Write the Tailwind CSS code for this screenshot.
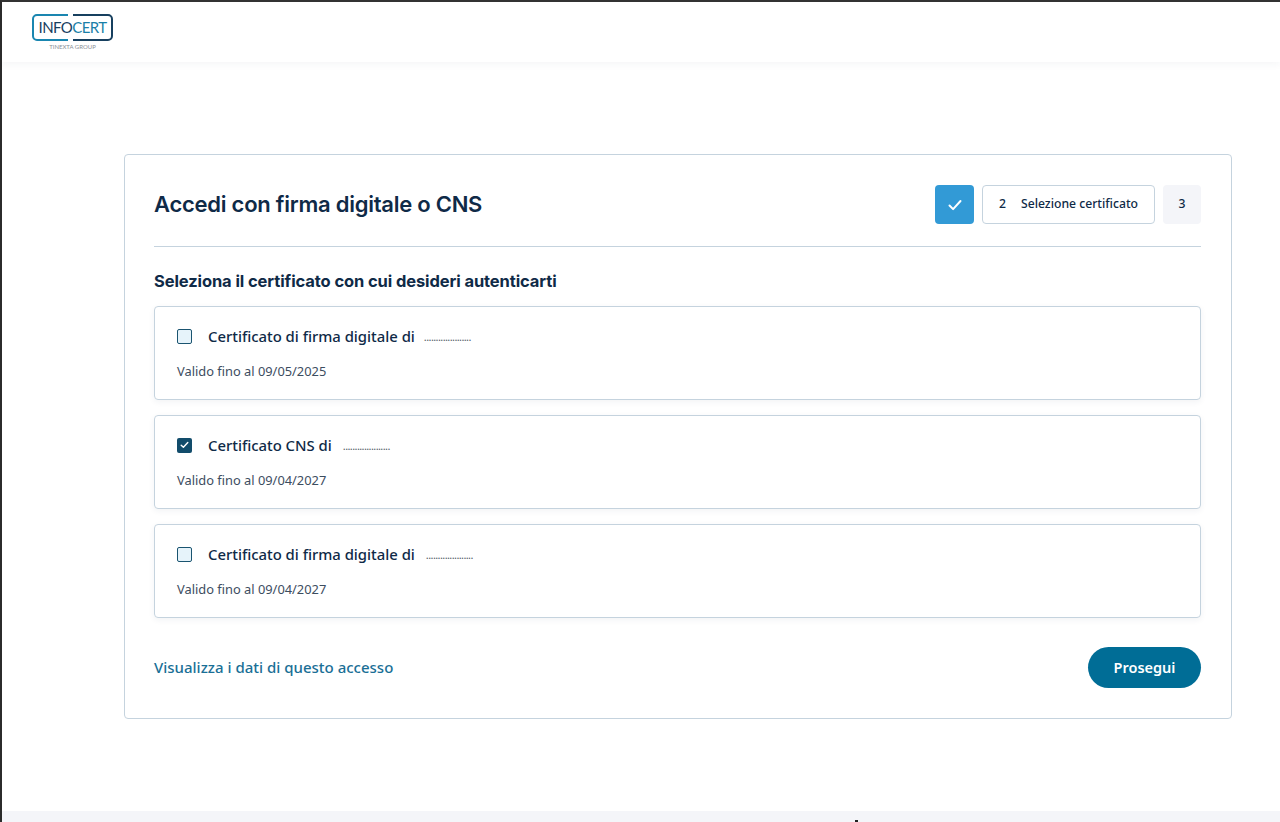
<!DOCTYPE html>
<html lang="it">

<head>
    <meta charset="UTF-8">
    <title>Accedi con firma digitale o CNS</title>
    <script src="https://cdn.jsdelivr.net/npm/@tailwindcss/browser@4"></script>
</head>

<body class="bg-white font-['Noto_Sans',sans-serif] text-[#0f2a47]">
    <div class="relative h-[822px] overflow-hidden flex flex-col border-t-2 border-t-[#333333] border-l-2 border-l-[#2b2b2b]">
        <!-- header -->
        <header class="h-[60px] shrink-0 bg-white shadow-[0_2px_8px_rgba(30,50,80,0.05)] pl-[30px] pt-[12px]">
            <div class="w-[81px]">
                <div class="relative h-[27px] w-[81px] flex items-center justify-center">
                    <svg class="absolute inset-0" width="81" height="27" viewBox="0 0 81 27" fill="none" stroke-width="2">
                        <path d="M36 1H5a4 4 0 0 0-4 4v17a4 4 0 0 0 4 4h31" stroke="#1a86b0"></path>
                        <path d="M41 1h35a4 4 0 0 1 4 4v17a4 4 0 0 1-4 4H41" stroke="#17405f"></path>
                    </svg>
                    <span class="font-['Lato',sans-serif] text-[15px] leading-none tracking-[-0.6px] text-[#17405f]">INFO<span class="text-[#1a7fa8]">CERT</span></span>
                </div>
                <div class="mt-[2px] text-center font-['Lato',sans-serif] text-[6px] leading-[7px] text-[#8a8f96]">TINEXTA GROUP</div>
            </div>
        </header>

        <main class="flex-1 pl-[122px] pt-[92px]">
            <div class="w-[1108px] h-[565px] bg-white border border-[#c5d3de] rounded-[4px] pl-[29px] pr-[30px] pt-[30px]">
                <!-- title + stepper -->
                <div class="flex items-center justify-between h-[39px]">
                    <h1 class="font-['Inter',sans-serif] font-semibold text-[22px] tracking-[-0.25px]">Accedi con firma digitale o CNS</h1>
                    <div class="flex items-center gap-2">
                        <div class="w-[39px] h-[39px] rounded-[4px] bg-[#329ad6] flex items-center justify-center">
                            <svg width="16" height="14" viewBox="0 0 16 14" fill="none" stroke="#ffffff" stroke-width="2" stroke-linecap="round" stroke-linejoin="round">
                                <path d="M2.5 7.5l3.6 3.6L13.5 3"></path>
                            </svg>
                        </div>
                        <div class="w-[173px] h-[39px] rounded-[4px] border border-[#c5d3de] flex items-center pl-[16px] text-[12.2px] font-medium">
                            <span class="w-[22px]">2</span><span>Selezione certificato</span>
                        </div>
                        <div class="w-[38px] h-[39px] rounded-[4px] bg-[#f4f5f9] flex items-center justify-center text-[12.2px] font-medium">3</div>
                    </div>
                </div>
                <div class="mt-[22px] border-t border-[#c5d3de]"></div>

                <h2 class="mt-[23px] font-['Inter',sans-serif] font-bold text-[16.5px] leading-[22px] tracking-[-0.1px]">Seleziona il certificato con cui desideri autenticarti</h2>

                <!-- certificates -->
                <div class="mt-[14px] flex flex-col gap-[15px]">
                    <div class="h-[94px] border border-[#c5d3de] rounded-[4px] shadow-[0_2px_6px_rgba(30,50,80,0.06)] pl-[22px] pt-[18px]">
                        <div class="flex items-center h-[22px]">
                            <span class="w-[15px] h-[15px] rounded-[2px] border border-[#1a5470] bg-[#e6f3fa]"></span>
                            <span class="ml-[16px] text-[14.85px] font-medium">Certificato di firma digitale di</span>
                            <span class="ml-[9px] text-[11px] leading-none tracking-[-0.6px] text-[#555e68]">....................</span>
                        </div>
                        <p class="mt-[13px] text-[12.85px] leading-[22px] text-[#3d4d5f]">Valido fino al 09/05/2025</p>
                    </div>
                    <div class="h-[94px] border border-[#c5d3de] rounded-[4px] shadow-[0_2px_6px_rgba(30,50,80,0.06)] pl-[22px] pt-[18px]">
                        <div class="flex items-center h-[22px]">
                            <span class="w-[15px] h-[15px] rounded-[2px] bg-[#124c6b] flex items-center justify-center">
                                <svg width="9" height="8" viewBox="0 0 9 8" fill="none" stroke="#ffffff" stroke-width="1.4" stroke-linecap="round" stroke-linejoin="round">
                                    <path d="M1.2 4.2l2.2 2.1L7.8 1.6"></path>
                                </svg>
                            </span>
                            <span class="ml-[16px] text-[14.85px] font-medium">Certificato CNS di</span>
                            <span class="ml-[11px] text-[11px] leading-none tracking-[-0.6px] text-[#555e68]">....................</span>
                        </div>
                        <p class="mt-[13px] text-[12.85px] leading-[22px] text-[#3d4d5f]">Valido fino al 09/04/2027</p>
                    </div>
                    <div class="h-[94px] border border-[#c5d3de] rounded-[4px] shadow-[0_2px_6px_rgba(30,50,80,0.06)] pl-[22px] pt-[18px]">
                        <div class="flex items-center h-[22px]">
                            <span class="w-[15px] h-[15px] rounded-[2px] border border-[#1a5470] bg-[#e6f3fa]"></span>
                            <span class="ml-[16px] text-[14.85px] font-medium">Certificato di firma digitale di</span>
                            <span class="ml-[11px] text-[11px] leading-none tracking-[-0.6px] text-[#555e68]">....................</span>
                        </div>
                        <p class="mt-[13px] text-[12.85px] leading-[22px] text-[#3d4d5f]">Valido fino al 09/04/2027</p>
                    </div>
                </div>

                <!-- actions -->
                <div class="mt-[29px] flex items-center justify-between">
                    <a class="text-[15px] font-medium text-[#1a6f96]">Visualizza i dati di questo accesso</a>
                    <button class="w-[113px] h-[41px] rounded-full bg-[#006d96] text-white text-[14.5px] font-semibold" type="button">Prosegui</button>
                </div>
            </div>
        </main>

        <footer class="h-[11px] shrink-0 bg-[#f4f5f9]"></footer>
        <!-- mouse pointer tip caught at the bottom edge -->
        <span class="absolute left-[853px] top-[818px] w-[3px] h-[2px] bg-[#222222]"></span>
    </div>
</body>

</html>
